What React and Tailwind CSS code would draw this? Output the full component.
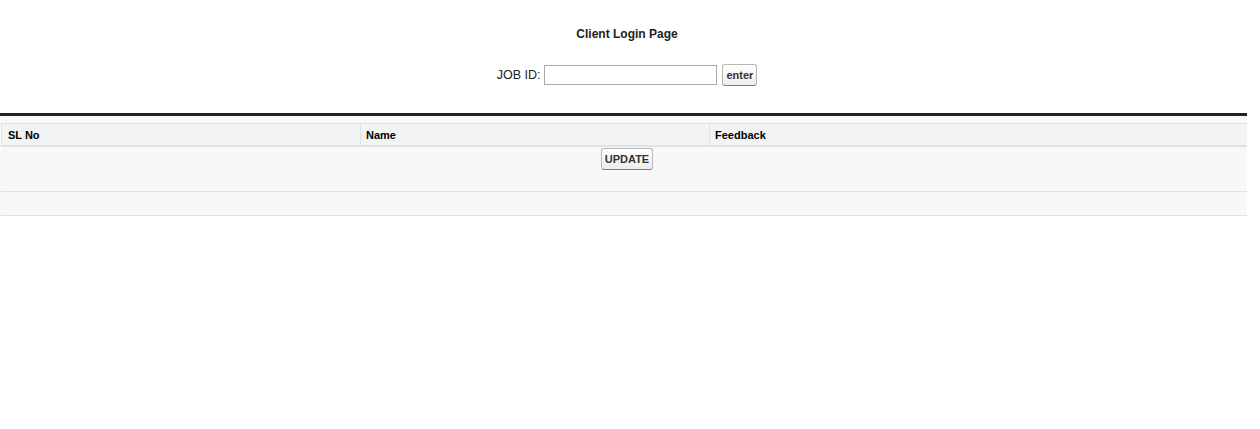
export default function App() {
  const font = { fontFamily: '"Liberation Sans", Arial, sans-serif' };
  return (
    <div className="w-[1247px] bg-white text-[#222]" style={font}>
      <div className="h-[113px] flex flex-col items-center pl-[7px]">
        <div className="mt-[27px] text-[12px] leading-[14px] font-bold text-[#222]">Client Login Page</div>
        <div className="mt-[23px] flex items-center">
          <span className="text-[12.5px] leading-[15px] text-[#222] mr-[4px]">JOB ID:</span>
          <input
            type="text"
            className="w-[173px] h-[20px] border border-[#a9a9a9] bg-white outline-none px-[2px] text-[13px]"
          />
          <button className="ml-[5px] h-[22px] px-[3px] text-[11px] font-bold text-[#333] border border-[#b5b5b5] border-b-[#7f7f7f] rounded-[3px] bg-gradient-to-b from-white to-[#ededed]">
            enter
          </button>
        </div>
      </div>
      <div className="h-[3px] bg-[#222]" />
      <div className="bg-[#f8f8f8] pt-[7px] pl-[1px]">
        <div className="border-t border-[#e0e3e5]">
          <div className="flex bg-[#f2f3f3] border-b-2 border-[#e0e3e5] h-[23px] text-[11px] font-bold text-[#000]">
            <div className="w-[359px] border-l border-[#e0e3e5] pl-[6px] pt-[1px] flex items-center">SL No</div>
            <div className="w-[349px] border-l border-[#e0e3e5] pl-[5px] pt-[1px] flex items-center">Name</div>
            <div className="flex-1 border-l border-[#e0e3e5] pl-[5px] pt-[1px] flex items-center">Feedback</div>
          </div>
          <div className="h-[45px] flex justify-center border-b border-[#e3e3e3] bg-[#f8f8f8] pl-[6px]">
            <button className="mt-[1px] h-[22px] w-[52px] text-[11px] font-bold text-[#333] border border-[#b5b5b5] border-b-[#7f7f7f] rounded-[3px] bg-gradient-to-b from-white to-[#ededed]">
              UPDATE
            </button>
          </div>
          <div className="h-[24px] border-b border-[#e3e3e3] bg-[#f8f8f8]" />
        </div>
      </div>
      <div className="h-[214px] bg-white" />
    </div>
  );
}
